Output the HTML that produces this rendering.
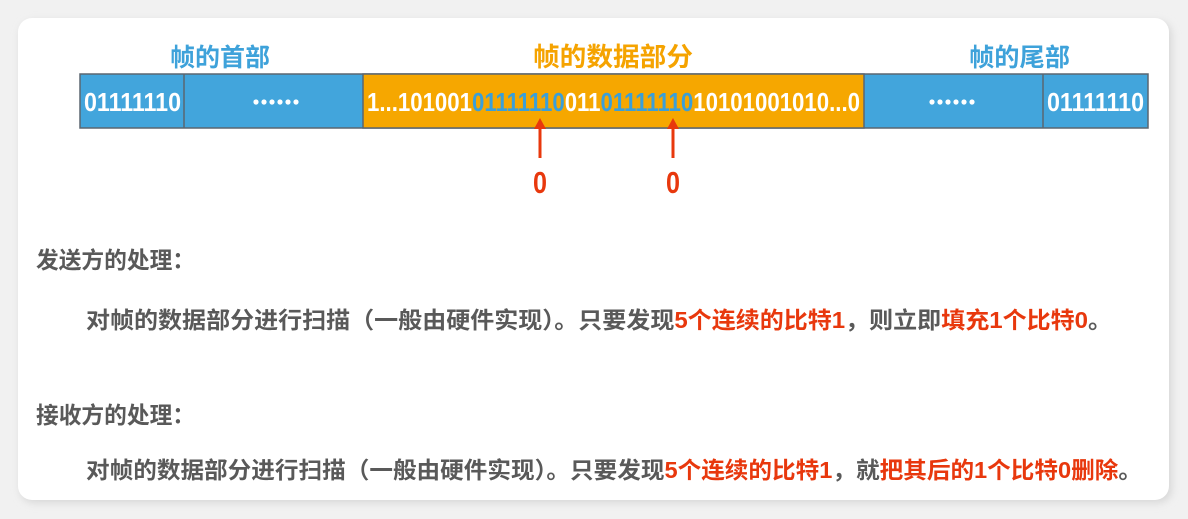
<!DOCTYPE html>
<html><head><meta charset="utf-8"><style>
html,body{margin:0;padding:0;background:#f1f1f1;width:1188px;height:519px;overflow:hidden}
svg{display:block}
</style></head><body>
<svg width="1188" height="519" viewBox="0 0 1188 519" xmlns="http://www.w3.org/2000/svg">
<defs><filter id="sh" x="-5%" y="-5%" width="110%" height="110%"><feGaussianBlur stdDeviation="4"/></filter></defs>
<rect x="20" y="21" width="1152" height="482" rx="14" fill="#d8d8d8" filter="url(#sh)"/>
<rect x="18" y="18" width="1151" height="482" rx="14" fill="#fff"/>
<g font-family="'Liberation Sans','Noto Sans CJK SC',sans-serif" font-weight="bold">
<text x="170" y="66" font-size="25" fill="#3ea2da" textLength="100" lengthAdjust="spacingAndGlyphs">帧的首部</text>
<text x="533" y="66" font-size="26" fill="#f5a300" textLength="160" lengthAdjust="spacingAndGlyphs">帧的数据部分</text>
<text x="969" y="66" font-size="25" fill="#3ea2da" textLength="101" lengthAdjust="spacingAndGlyphs">帧的尾部</text>
<rect x="80" y="74" width="1068" height="54" fill="#42a5dc" stroke="#5b6670" stroke-width="1.5"/>
<rect x="363" y="74" width="501" height="54" fill="#f6a700" stroke="#5b6670" stroke-width="1.5"/>
<line x1="184" y1="74" x2="184" y2="128" stroke="#5b6670" stroke-width="1.5"/>
<line x1="1043" y1="74" x2="1043" y2="128" stroke="#5b6670" stroke-width="1.5"/>
<g fill="#fff">
<circle cx="256" cy="102" r="2.6"/><circle cx="264" cy="102" r="2.6"/><circle cx="272" cy="102" r="2.6"/><circle cx="280" cy="102" r="2.6"/><circle cx="288" cy="102" r="2.6"/><circle cx="296" cy="102" r="2.6"/>
<circle cx="891" cy="102" r="2.6" transform="translate(0,0)"/>
</g>
<g fill="#fff">
<circle cx="932" cy="102" r="2.6"/><circle cx="940" cy="102" r="2.6"/><circle cx="948" cy="102" r="2.6"/><circle cx="956" cy="102" r="2.6"/><circle cx="964" cy="102" r="2.6"/><circle cx="972" cy="102" r="2.6"/>
</g>
<rect x="880" y="95" width="20" height="14" fill="#42a5dc"/>
<g font-size="26" fill="#fff">
<text x="84" y="111" textLength="97" lengthAdjust="spacingAndGlyphs">01111110</text>
<text x="1047" y="111" textLength="97" lengthAdjust="spacingAndGlyphs">01111110</text>
<text x="367" y="111" textLength="493" lengthAdjust="spacingAndGlyphs">1...101001<tspan fill="#3a9fd9">01111110</tspan>011<tspan fill="#3a9fd9">01111110</tspan>10101001010...0</text>
</g>
<g stroke="#e8380d" stroke-width="3" fill="#e8380d">
<line x1="540" y1="128" x2="540" y2="158"/><polygon points="540,118 534,129 546,129" stroke="none"/>
<line x1="673" y1="128" x2="673" y2="158"/><polygon points="673,118 667,129 679,129" stroke="none"/>
</g>
<text x="533" y="193" font-size="31" fill="#e8380d" textLength="14" lengthAdjust="spacingAndGlyphs">0</text>
<text x="666" y="193" font-size="31" fill="#e8380d" textLength="14" lengthAdjust="spacingAndGlyphs">0</text>
<g font-size="23" fill="#595959">
<text x="36" y="268" textLength="159" lengthAdjust="spacingAndGlyphs">发送方的处理：</text>
<text x="86" y="328" textLength="1026" lengthAdjust="spacingAndGlyphs">对帧的数据部分进行扫描（一般由硬件实现）。只要发现<tspan fill="#e8380d">5个连续的比特1</tspan>，则立即<tspan fill="#e8380d">填充1个比特0</tspan>。</text>
<text x="36" y="423" textLength="159" lengthAdjust="spacingAndGlyphs">接收方的处理：</text>
<text x="86" y="478" textLength="1056" lengthAdjust="spacingAndGlyphs">对帧的数据部分进行扫描（一般由硬件实现）。只要发现<tspan fill="#e8380d">5个连续的比特1</tspan>，就<tspan fill="#e8380d">把其后的1个比特0删除</tspan>。</text>
</g>
</g>
</svg>
</body></html>
